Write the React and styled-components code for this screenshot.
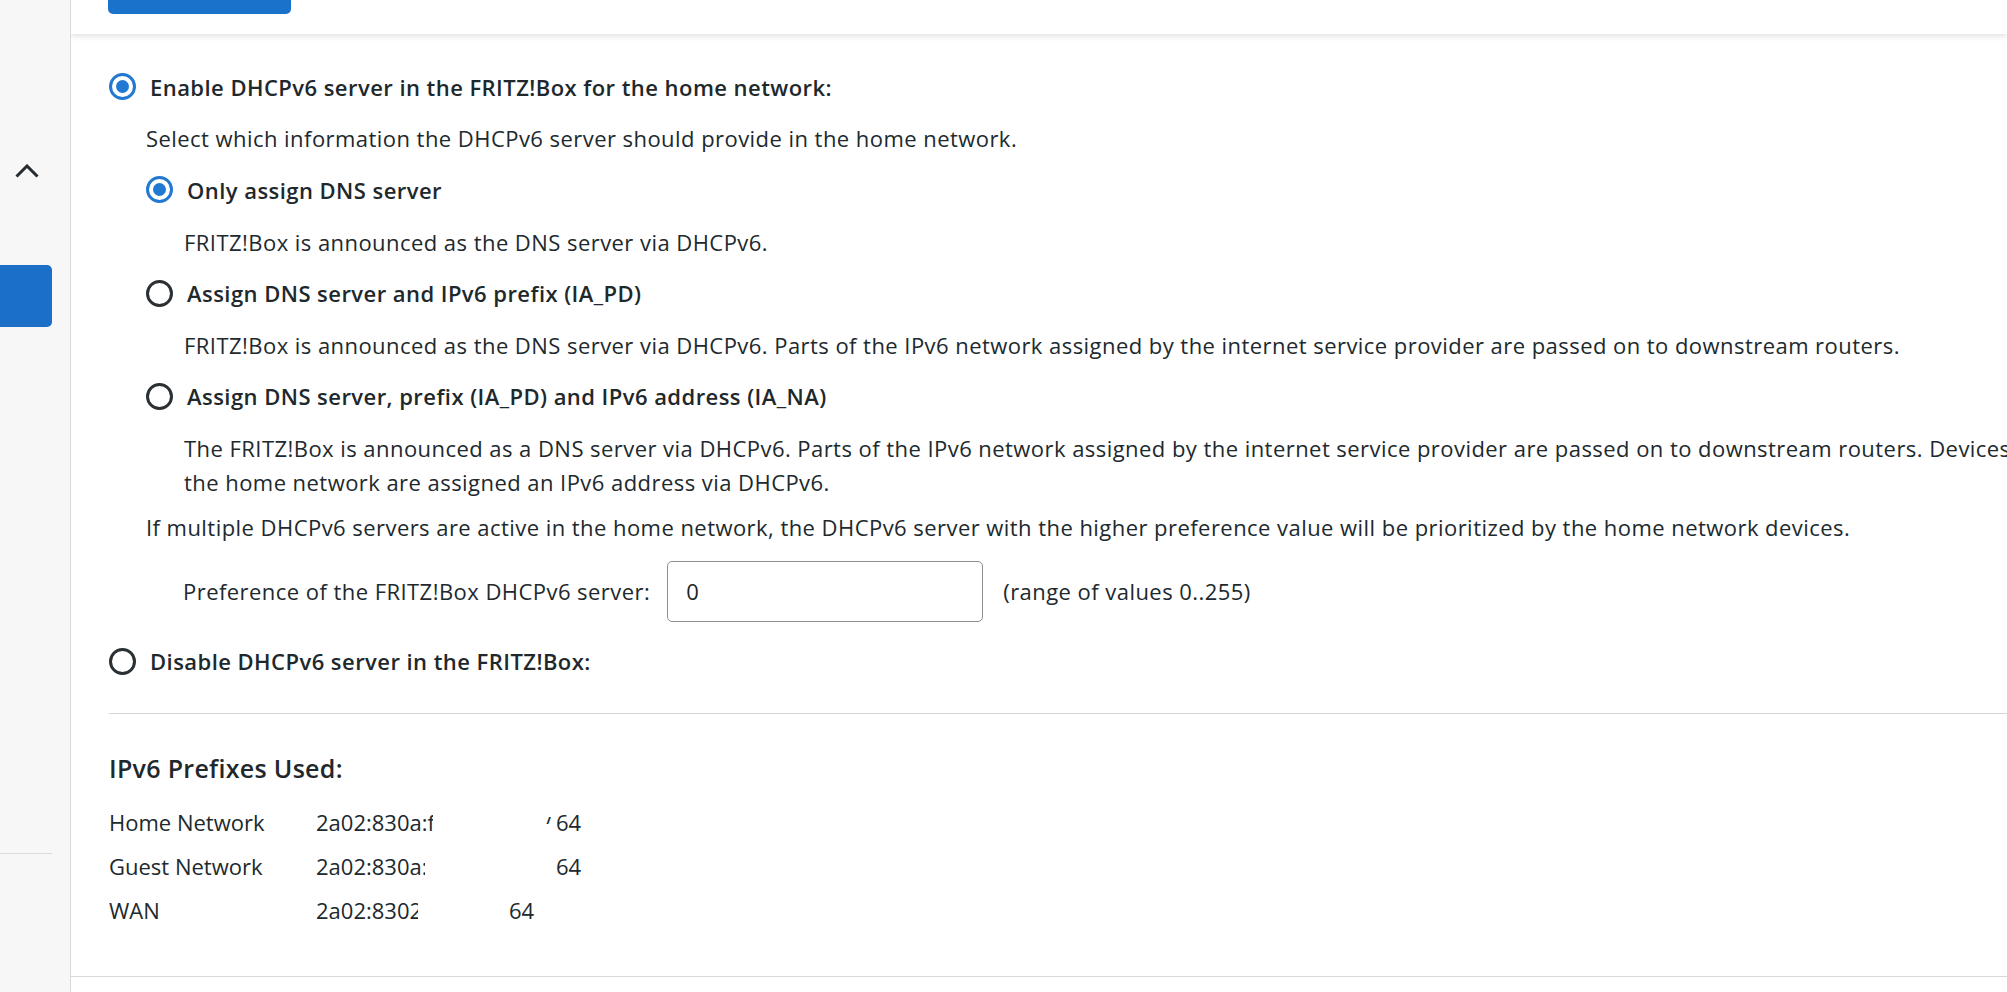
import styled, { createGlobalStyle } from 'styled-components'

const GlobalStyle = createGlobalStyle`
  html, body {
    margin: 0;
    padding: 0;
    overflow: hidden;
    background: #ffffff;
  }
  body {
    font-family: "Open Sans", "Noto Sans", sans-serif;
    font-size: 22px;
    letter-spacing: 0.45px;
    color: #20292d;
  }
`;

const Page = styled.div`
  display: grid;
  grid-template-columns: 71px 1fr;
  width: 2007px;
  height: 992px;
`;

const Sidebar = styled.aside`
  display: flex;
  flex-direction: column;
  padding-top: 164px;
  background: #f7f7f7;
  border-right: 1px solid #d9d9d9;
`;

const Chevron = styled.svg`
  margin-left: 15px;
  width: 24px;
  height: 14px;
`;

const NavActive = styled.div`
  margin-top: 87px;
  width: 52px;
  height: 62px;
  background: #1b6fc6;
  border-radius: 0 5px 5px 0;
`;

const NavRule = styled.div`
  margin-top: 526px;
  width: 52px;
  border-top: 1px solid #dcdcdc;
`;

const Main = styled.main`
  display: flex;
  flex-direction: column;
  min-width: 0;
  overflow: hidden;
`;

const TopBar = styled.header`
  position: relative;
  z-index: 1;
  height: 34px;
  padding-left: 37px;
  background: #ffffff;
  box-shadow: 0 2px 6px rgba(0, 0, 0, 0.13);
`;

const TopButton = styled.div`
  width: 183px;
  height: 14px;
  background: #1b72cb;
  border-radius: 0 0 5px 5px;
`;

const Content = styled.section`
  padding: 27px 0 0 38px;
  white-space: nowrap;
`;

const RadioRow = styled.label`
  display: flex;
  align-items: center;
  gap: 14px;
  height: 51.6px;
  padding-left: ${p => p.$indent || 0}px;
  font-weight: 600;
  color: #20282c;
`;

const Radio = styled.span`
  display: grid;
  place-items: center;
  flex: none;
  box-sizing: border-box;
  width: 27px;
  height: 27px;
  border-radius: 50%;
  border: 3px solid ${p => (p.$checked ? '#2179d2' : '#2a3033')};

  &::after {
    content: "";
    display: ${p => (p.$checked ? 'block' : 'none')};
    width: 13px;
    height: 13px;
    border-radius: 50%;
    background: #2179d2;
  }
`;

const Line = styled.p`
  display: flex;
  align-items: center;
  height: 51.6px;
  margin: 0;
  padding-left: ${p => p.$indent || 0}px;
`;

const Para = styled.p`
  margin: 0;
  padding: 10px 0 2px ${p => p.$indent || 0}px;
  line-height: 33.5px;
`;

const PrefRow = styled.div`
  display: flex;
  align-items: center;
  gap: 17px;
  padding: 8px 0 13.6px 74px;
`;

const NumberInput = styled.input`
  box-sizing: border-box;
  width: 316px;
  height: 61px;
  padding: 0 18px;
  border: 1px solid #8b9094;
  border-radius: 5px;
  font: inherit;
  color: #1d2225;
  background: #ffffff;
`;

const Hint = styled.span`
  margin-left: 3px;
`;

const Divider = styled.hr`
  margin: 26px 0 0;
  border: 0;
  border-top: 1px solid #d6d6d6;
`;

const Heading = styled.h2`
  margin: 28px 0 0;
  height: 52px;
  line-height: 52px;
  font-size: 25px;
  letter-spacing: 0.3px;
  font-weight: 600;
  color: #20282c;
`;

const PrefixTable = styled.div`
  margin-top: 6px;
  letter-spacing: 0;
`;

const PrefixRow = styled.div`
  display: flex;
  align-items: center;
  height: 44px;
`;

const PrefixLabel = styled.span`
  width: 207px;
`;

const PrefixCell = styled.span`
  display: flex;
  align-items: center;
  width: ${p => p.$width}px;
`;

const Clip = styled.span`
  display: inline-block;
  width: ${p => p.$width}px;
  overflow: hidden;
`;

const Slash = styled.span`
  display: inline-block;
  height: 12px;
  margin: -8px 0 0 auto;
  padding-right: 5px;
  overflow: hidden;
  line-height: 24px;
`;

const BottomRule = styled.div`
  margin-top: 44px;
  border-top: 1px solid #d9d9d9;
`;

const prefixes = [
  { name: 'Home Network', value: '2a02:830a:f', clip: 117, cell: 240, slash: true },
  { name: 'Guest Network', value: '2a02:830a:', clip: 109, cell: 240 },
  { name: 'WAN', value: '2a02:8302:', clip: 102, cell: 193 },
];

export default function App() {
  return (
    <>
      <GlobalStyle />
      <Page>
        <Sidebar>
          <Chevron viewBox="0 0 24 14" fill="none">
            <path d="M1.5 12.5 L12 2 L22.5 12.5" stroke="#262c2f" strokeWidth="3" />
          </Chevron>
          <NavActive />
          <NavRule />
        </Sidebar>

        <Main>
          <TopBar>
            <TopButton />
          </TopBar>

          <Content>
            <RadioRow>
              <Radio $checked />
              Enable DHCPv6 server in the FRITZ!Box for the home network:
            </RadioRow>
            <Line $indent={37}>Select which information the DHCPv6 server should provide in the home network.</Line>

            <RadioRow $indent={37}>
              <Radio $checked />
              Only assign DNS server
            </RadioRow>
            <Line $indent={75}>FRITZ!Box is announced as the DNS server via DHCPv6.</Line>

            <RadioRow $indent={37}>
              <Radio />
              Assign DNS server and IPv6 prefix (IA_PD)
            </RadioRow>
            <Line $indent={75}>
              FRITZ!Box is announced as the DNS server via DHCPv6. Parts of the IPv6 network assigned by the internet service provider are passed on to downstream routers.
            </Line>

            <RadioRow $indent={37}>
              <Radio />
              Assign DNS server, prefix (IA_PD) and IPv6 address (IA_NA)
            </RadioRow>
            <Para $indent={75}>
              The FRITZ!Box is announced as a DNS server via DHCPv6. Parts of the IPv6 network assigned by the internet service provider are passed on to downstream routers. Devices in
              <br />
              the home network are assigned an IPv6 address via DHCPv6.
            </Para>

            <Line $indent={37}>
              If multiple DHCPv6 servers are active in the home network, the DHCPv6 server with the higher preference value will be prioritized by the home network devices.
            </Line>

            <PrefRow>
              <span>Preference of the FRITZ!Box DHCPv6 server:</span>
              <NumberInput defaultValue="0" />
              <Hint>(range of values 0..255)</Hint>
            </PrefRow>

            <RadioRow>
              <Radio />
              Disable DHCPv6 server in the FRITZ!Box:
            </RadioRow>

            <Divider />

            <Heading>IPv6 Prefixes Used:</Heading>
            <PrefixTable>
              {prefixes.map(p => (
                <PrefixRow key={p.name}>
                  <PrefixLabel>{p.name}</PrefixLabel>
                  <PrefixCell $width={p.cell}>
                    <Clip $width={p.clip}>{p.value}</Clip>
                    {p.slash && <Slash>/</Slash>}
                  </PrefixCell>
                  <span>64</span>
                </PrefixRow>
              ))}
            </PrefixTable>
          </Content>

          <BottomRule />
        </Main>
      </Page>
    </>
  )
}
